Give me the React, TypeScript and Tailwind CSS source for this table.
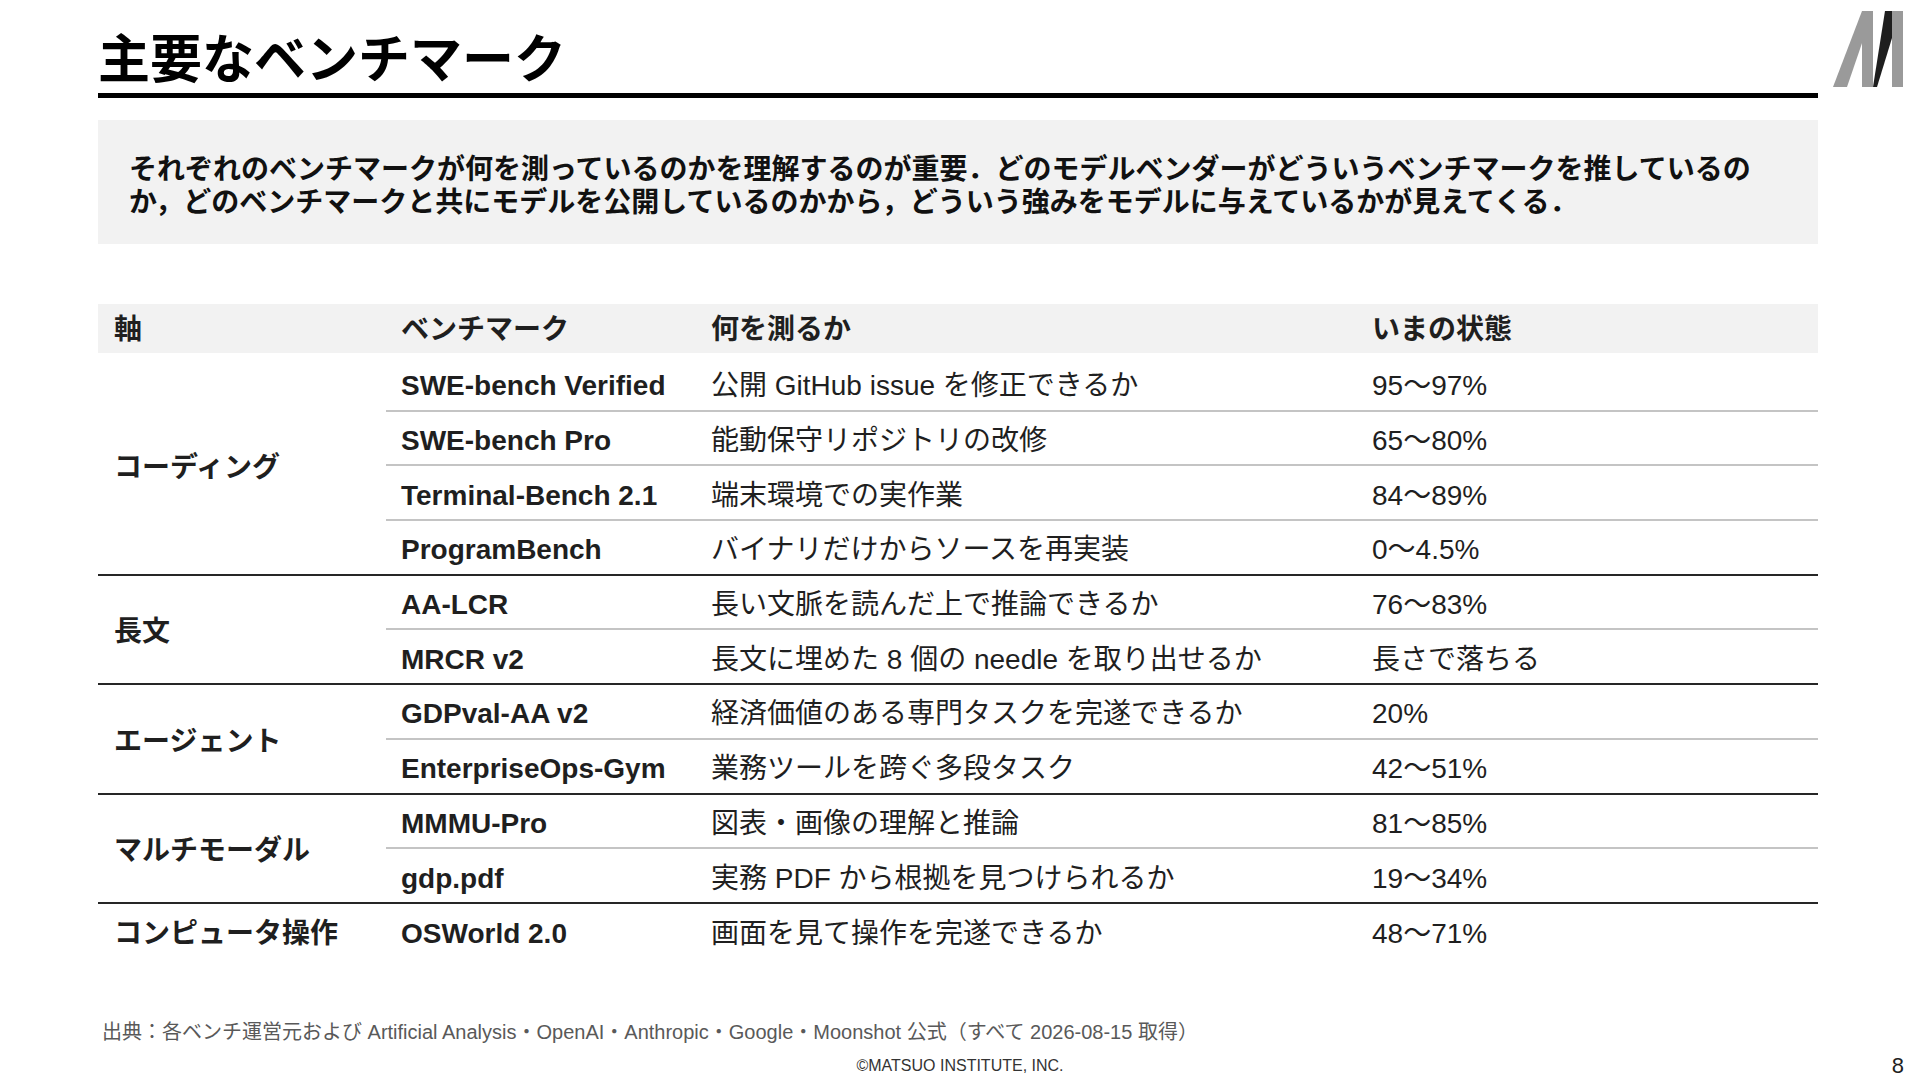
type Row = { bench: string; what: string; status: string };
type Group = { axis: string; rows: Row[] };

const GROUPS: Group[] = [
  {
    axis: 'コーディング',
    rows: [
      { bench: 'SWE-bench Verified', what: '公開 GitHub issue を修正できるか', status: '95〜97%' },
      { bench: 'SWE-bench Pro', what: '能動保守リポジトリの改修', status: '65〜80%' },
      { bench: 'Terminal-Bench 2.1', what: '端末環境での実作業', status: '84〜89%' },
      { bench: 'ProgramBench', what: 'バイナリだけからソースを再実装', status: '0〜4.5%' },
    ],
  },
  {
    axis: '長文',
    rows: [
      { bench: 'AA-LCR', what: '長い文脈を読んだ上で推論できるか', status: '76〜83%' },
      { bench: 'MRCR v2', what: '長文に埋めた 8 個の needle を取り出せるか', status: '長さで落ちる' },
    ],
  },
  {
    axis: 'エージェント',
    rows: [
      { bench: 'GDPval-AA v2', what: '経済価値のある専門タスクを完遂できるか', status: '20%' },
      { bench: 'EnterpriseOps-Gym', what: '業務ツールを跨ぐ多段タスク', status: '42〜51%' },
    ],
  },
  {
    axis: 'マルチモーダル',
    rows: [
      { bench: 'MMMU-Pro', what: '図表・画像の理解と推論', status: '81〜85%' },
      { bench: 'gdp.pdf', what: '実務 PDF から根拠を見つけられるか', status: '19〜34%' },
    ],
  },
  {
    axis: 'コンピュータ操作',
    rows: [{ bench: 'OSWorld 2.0', what: '画面を見て操作を完遂できるか', status: '48〜71%' }],
  },
];

// 右上のロゴ（M）
function Logo() {
  return (
    <svg viewBox="0 0 71 76" className="absolute left-[1833px] top-[11px] w-[71px] h-[76px]">
      <polygon points="0,76 14,76 40,0 29,0" fill="#9a9a9a" />
      <polygon points="29,0 40,0 40,76 29,76" fill="#9a9a9a" />
      <polygon points="52,0 59,0 59,27 44,76 40,76" fill="#1e1e1e" />
      <polygon points="59,0 70,0 70,76 59,76" fill="#9a9a9a" />
    </svg>
  );
}

export default function App() {
  return (
    <div className="relative w-[1920px] h-[1080px] bg-white text-[#1f1f1f] font-['Liberation_Sans','Noto_Sans_CJK_JP',sans-serif] flex flex-col overflow-hidden">
      <Logo />

      <div className="px-[98px] pr-[102px]">
        {/* タイトル */}
        <h1 className="mt-[34px] h-[52px] text-[52px] leading-[52px] font-bold text-black">
          主要なベンチマーク
        </h1>
        <div className="mt-[7px] h-[5px] bg-black" />

        {/* リード文 */}
        <div className="mt-[22px] h-[124px] bg-[#f2f2f2] px-[31px] pt-[33px]">
          <p className="text-[28px] leading-[33px] font-bold text-[#111]">
            それぞれのベンチマークが何を測っているのかを理解するのが重要．どのモデルベンダーがどういうベンチマークを推しているの
            <br />
            か，どのベンチマークと共にモデルを公開しているのかから，どういう強みをモデルに与えているかが見えてくる．
          </p>
        </div>

        {/* 表 */}
        <div className="mt-[60px] text-[28px]">
          <div className="flex h-[49px] items-center pt-[2px] bg-[#f2f2f2] font-bold">
            <div className="w-[288px] pl-[16px]">軸</div>
            <div className="w-[310px] pl-[15px]">ベンチマーク</div>
            <div className="w-[661px] pl-[15px]">何を測るか</div>
            <div className="flex-1 pl-[15px]">いまの状態</div>
          </div>

          <div className="mt-[4px]">
            {GROUPS.map((g, gi) => {
              const lastGroup = gi === GROUPS.length - 1;
              return (
                <div
                  key={g.axis}
                  className={`flex ${lastGroup ? '' : 'border-b-2 border-[#262626]'}`}
                >
                  <div className="w-[288px] pl-[16px] pt-[6px] flex items-center font-bold">{g.axis}</div>
                  <div className="flex-1">
                    {g.rows.map((r, ri) => {
                      const lastRow = ri === g.rows.length - 1;
                      return (
                        <div
                          key={r.bench}
                          className={`flex items-center pt-[6px] ${
                            lastRow
                              ? lastGroup
                                ? 'h-[54.7px]'
                                : 'h-[52.7px]'
                              : 'h-[54.7px] border-b-2 border-[#c4c4c4]'
                          }`}
                        >
                          <div className="w-[310px] pl-[15px] font-bold">{r.bench}</div>
                          <div className="w-[661px] pl-[15px]">{r.what}</div>
                          <div className="flex-1 pl-[15px]">{r.status}</div>
                        </div>
                      );
                    })}
                  </div>
                </div>
              );
            })}
          </div>
        </div>
      </div>

      {/* 出典 */}
      <p className="mt-[61px] pl-[102px] text-[20px] leading-[24px] text-[#595959]">
        出典：各ベンチ運営元および Artificial Analysis・OpenAI・Anthropic・Google・Moonshot 公式（すべて 2026-08-15 取得）
      </p>

      <div className="mt-[12px] px-[16px] grid grid-cols-[1fr_auto_1fr] items-center h-[20px]">
        <div />
        <div className="text-[16px] leading-[20px] text-[#333]">©MATSUO INSTITUTE, INC.</div>
        <div className="justify-self-end text-[22px] leading-[20px] text-[#1f1f1f]">8</div>
      </div>
    </div>
  );
}
